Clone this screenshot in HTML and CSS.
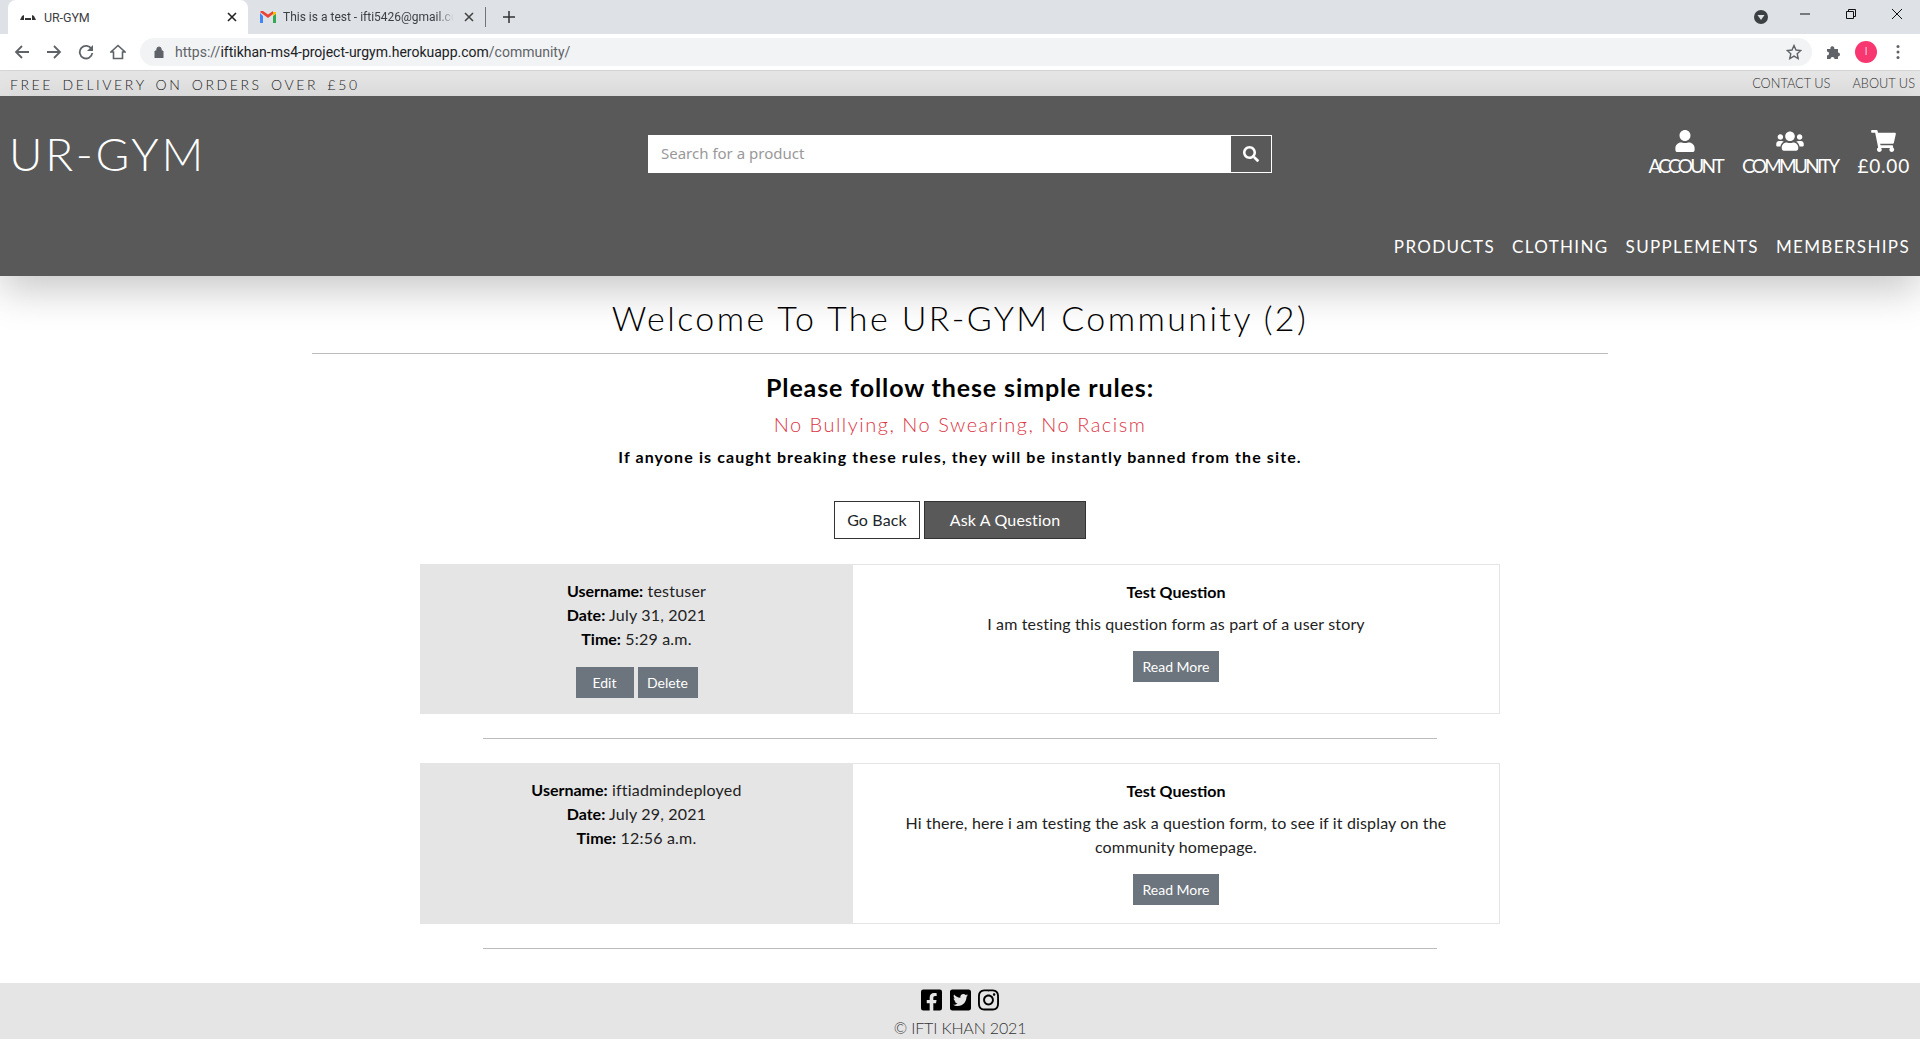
FILE: index.html
```html
<!DOCTYPE html>
<html lang="en">
<head>
<meta charset="utf-8">
<title>UR-GYM</title>
<link rel="stylesheet" href="styles.css">
</head>
<body>
<div class="tabstrip">
  <div class="tab tab-active">
    <svg class="favicon" viewBox="0 0 16 8"><path d="M0 7 2 3l2-1v5zM5 5h6v2H5zM16 7l-2-4-2-1v5z" fill="#333"/></svg>
    <span class="tab-title">UR-GYM</span>
    <svg class="tab-x" viewBox="0 0 10 10"><path d="M1 1l8 8M9 1l-8 8" stroke="#222" stroke-width="1.6"/></svg>
  </div>
  <div class="tab tab-other">
    <svg class="favicon gm" viewBox="0 0 16 12"><path d="M0 2v10h3V5z" fill="#4285f4"/><path d="M16 2v10h-3V5z" fill="#34a853"/><path d="M13 1v4l3-2V1z" fill="#fbbc04"/><path d="M0 1l8 6 5-4V0L8 3.500 3 0 1 0 0 1z" fill="#ea4335"/></svg>
    <span class="tab-title clip">This is a test - ifti5426@gmail.co</span>
    <svg class="tab-x" viewBox="0 0 10 10"><path d="M1 1l8 8M9 1l-8 8" stroke="#444" stroke-width="1.6"/></svg>
  </div>
  <span class="tab-sep"></span>
  <svg class="plus" viewBox="0 0 12 12"><path d="M6 0v12M0 6h12" stroke="#333" stroke-width="1.5"/></svg>
  <span class="strip-fill"></span>
  <svg class="media" viewBox="0 0 14 14"><circle cx="7" cy="7" r="7" fill="#3c4043"/><path d="M3.500 5h7L7 10z" fill="#dee1e6"/></svg>
  <div class="winbtns">
    <svg viewBox="0 0 12 12"><path d="M1 6h10" stroke="#111" stroke-width="1"/></svg>
    <svg viewBox="0 0 12 12"><path d="M1.500 3.500h7v7h-7zM3.500 3.500v-2h7v7h-2" fill="none" stroke="#111"/></svg>
    <svg viewBox="0 0 12 12"><path d="M1 1l10 10M11 1L1 11" stroke="#111"/></svg>
  </div>
</div>
<div class="toolbar">
  <svg class="tool" viewBox="0 0 16 16"><path d="M15 8H2M8 2L2 8l6 6" fill="none" stroke="#5f6368" stroke-width="1.800"/></svg>
  <svg class="tool" viewBox="0 0 16 16"><path d="M1 8h13M8 2l6 6-6 6" fill="none" stroke="#5f6368" stroke-width="1.800"/></svg>
  <svg class="tool" viewBox="0 0 16 16"><path d="M13.500 5A6.300 6.300 0 1 0 14.300 9" fill="none" stroke="#5f6368" stroke-width="1.800"/><path d="M15 1v6H9z" fill="#5f6368"/></svg>
  <svg class="tool" viewBox="0 0 16 16"><path d="M8 1.500L1 8h2.500v6.500h9V8H15z" fill="none" stroke="#5f6368" stroke-width="1.600"/></svg>
  <div class="omnibox">
    <svg class="lock" viewBox="0 0 10 12"><path d="M1 5h8v7H1zM2.800 5V3.200a2.200 2.200 0 0 1 4.400 0V5" fill="#5f6368" stroke="#5f6368"/></svg>
    <span class="url"><span class="url-dim">https://</span>iftikhan-ms4-project-urgym.herokuapp.com<span class="url-dim">/community/</span></span>
    <svg class="star" viewBox="0 0 16 16"><path d="M8 1.500l2 4.500 4.800.5-3.600 3.200 1 4.800L8 12.100 3.800 14.500l1-4.800L1.200 6.500 6 6z" fill="none" stroke="#5f6368" stroke-width="1.400"/></svg>
  </div>
  <svg class="puzzle" viewBox="0 0 16 16"><path d="M1 5h3.500a2 2 0 1 1 3.800-.500V5H12v3.500a2 2 0 1 1 0 4V15H8.500a2 2 0 1 0-4 0H1v-3.500a2 2 0 1 0 0-4z" fill="#5f6368"/></svg>
  <span class="avatar">I</span>
  <svg class="dots" viewBox="0 0 4 16"><circle cx="2" cy="2.500" r="1.500" fill="#5f6368"/><circle cx="2" cy="8" r="1.500" fill="#5f6368"/><circle cx="2" cy="13.500" r="1.500" fill="#5f6368"/></svg>
</div>

<div class="promo">
  <span class="promo-text">FREE DELIVERY ON ORDERS OVER £50</span>
  <nav class="promo-links"><a>CONTACT US</a><a>ABOUT US</a></nav>
</div>

<header class="site-header">
  <div class="header-top">
    <a class="logo">UR-GYM</a>
    <form class="search">
      <span class="search-input">Search for a product</span>
      <span class="search-btn"><svg viewBox="0 0 512 512"><path fill="#fff" d="M505 442.700L405.300 343c-4.500-4.500-10.600-7-17-7H372c27.600-35.300 44-79.700 44-128C416 93.100 322.900 0 208 0S0 93.100 0 208s93.100 208 208 208c48.300 0 92.700-16.400 128-44v16.300c0 6.400 2.500 12.500 7 17l99.700 99.700c9.400 9.400 24.600 9.400 33.900 0l28.300-28.300c9.400-9.400 9.400-24.600.1-34zM208 336c-70.700 0-128-57.200-128-128 0-70.700 57.200-128 128-128 70.700 0 128 57.200 128 128 0 70.700-57.200 128-128 128z"/></svg></span>
    </form>
    <div class="header-icons">
      <a class="hicon"><svg class="ic-user" viewBox="0 0 448 512"><path fill="#fff" d="M224 256c70.700 0 128-57.300 128-128S294.700 0 224 0 96 57.300 96 128s57.300 128 128 128zm89.600 32h-16.700c-22.200 10.200-46.900 16-72.900 16s-50.600-5.800-72.900-16h-16.700C60.200 288 0 348.200 0 422.400V464c0 26.500 21.500 48 48 48h352c26.500 0 48-21.500 48-48v-41.600c0-74.200-60.200-134.400-134.400-134.400z"/></svg><span>ACCOUNT</span></a>
      <a class="hicon"><svg class="ic-users" viewBox="0 0 640 512"><path fill="#fff" d="M96 224c35.300 0 64-28.700 64-64s-28.700-64-64-64-64 28.700-64 64 28.700 64 64 64zm448 0c35.300 0 64-28.700 64-64s-28.700-64-64-64-64 28.700-64 64 28.700 64 64 64zm32 32h-64c-17.600 0-33.500 7.100-45.100 18.600 40.300 22.100 68.900 62 75.100 109.400h66c17.700 0 32-14.300 32-32v-32c0-35.300-28.700-64-64-64zm-256 0c61.900 0 112-50.100 112-112S381.900 32 320 32 208 82.100 208 144s50.100 112 112 112zm76.800 32h-8.300c-20.800 10-43.900 16-68.500 16s-47.600-6-68.500-16h-8.300C179.600 288 128 339.600 128 403.200V432c0 26.500 21.500 48 48 48h288c26.500 0 48-21.500 48-48v-28.800c0-63.600-51.600-115.200-115.200-115.200zm-223.700-13.400C161.500 263.100 145.600 256 128 256H64c-35.300 0-64 28.700-64 64v32c0 17.700 14.300 32 32 32h65.900c6.300-47.400 34.900-87.300 75.200-109.400z"/></svg><span>COMMUNITY</span></a>
      <a class="hicon hicon-price"><svg class="ic-cart" viewBox="0 0 576 512"><path fill="#fff" d="M528.120 301.319l47.273-208C578.806 78.301 567.391 64 551.990 64H159.208l-9.166-44.810C147.758 8.021 137.930 0 126.529 0H24C10.745 0 0 10.745 0 24v16c0 13.255 10.745 24 24 24h69.883l70.248 343.435C147.325 417.100 136 435.222 136 456c0 30.928 25.072 56 56 56s56-25.072 56-56c0-15.674-6.447-29.835-16.824-40h209.647C430.447 426.165 424 440.326 424 456c0 30.928 25.072 56 56 56s56-25.072 56-56c0-22.172-12.888-41.332-31.579-50.405l5.517-24.276c3.413-15.018-8.002-29.319-23.403-29.319H218.117l-6.545-32h293.145c11.206 0 20.920-7.754 23.403-18.681z"/></svg><span>£0.00</span></a>
    </div>
  </div>
  <nav class="mainnav"><a>PRODUCTS</a><a>CLOTHING</a><a>SUPPLEMENTS</a><a>MEMBERSHIPS</a></nav>
</header>

<main class="content">
  <h1 class="page-title">Welcome To The UR-GYM Community (2)</h1>
  <hr class="rule-wide">
  <h2 class="rules-head">Please follow these simple rules:</h2>
  <p class="rules-red">No Bullying, No Swearing, No Racism</p>
  <p class="rules-warn">If anyone is caught breaking these rules, they will be instantly banned from the site.</p>
  <div class="actions">
    <a class="btn btn-outline">Go Back</a>
    <a class="btn btn-dark">Ask A Question</a>
  </div>

  <article class="card card-one">
    <div class="meta">
      <p><b>Username:</b> testuser</p>
      <p><b>Date:</b> July 31, 2021</p>
      <p><b>Time:</b> 5:29 a.m.</p>
      <div class="meta-btns"><a class="sbtn sbtn-edit">Edit</a><a class="sbtn sbtn-del">Delete</a></div>
    </div>
    <div class="question">
      <h3>Test Question</h3>
      <p>I am testing this question form as part of a user story</p>
      <a class="sbtn">Read More</a>
    </div>
  </article>
  <hr class="rule-card">
  <article class="card card-two">
    <div class="meta">
      <p><b>Username:</b> iftiadmindeployed</p>
      <p><b>Date:</b> July 29, 2021</p>
      <p><b>Time:</b> 12:56 a.m.</p>
    </div>
    <div class="question">
      <h3>Test Question</h3>
      <p>Hi there, here i am testing the ask a question form, to see if it display on the community homepage.</p>
      <a class="sbtn">Read More</a>
    </div>
  </article>
  <hr class="rule-card">
</main>

<footer class="footer">
  <div class="socials">
    <svg viewBox="0 0 448 512"><path d="M400 32H48A48 48 0 0 0 0 80v352a48 48 0 0 0 48 48h137.250V327.690h-63V256h63v-54.640c0-62.150 37-96.480 93.670-96.480 27.140 0 55.520 4.840 55.520 4.840v61h-31.270c-30.810 0-40.420 19.120-40.420 38.730V256h68.780l-11 71.690h-57.780V480H400a48 48 0 0 0 48-48V80a48 48 0 0 0-48-48z"/></svg>
    <svg viewBox="0 0 448 512"><path d="M400 32H48C21.500 32 0 53.500 0 80v352c0 26.500 21.500 48 48 48h352c26.500 0 48-21.500 48-48V80c0-26.500-21.500-48-48-48zm-48.900 158.800c.2 2.800.2 5.700.2 8.500 0 86.700-66 186.600-186.600 186.600-37.200 0-71.700-10.800-100.700-29.400 5.300.6 10.400.8 15.800.8 30.700 0 58.900-10.400 81.400-28-28.800-.6-53-19.500-61.300-45.500 10.100 1.500 19.200 1.500 29.600-1.200-30-6.100-52.500-32.500-52.500-64.400v-.8c8.700 4.900 18.900 7.900 29.600 8.300a65.447 65.447 0 0 1-29.200-54.600c0-12.200 3.200-23.400 8.900-33.100 32.300 39.800 80.800 65.800 135.200 68.600-9.300-44.500 24-80.600 64-80.600 18.900 0 35.900 7.900 47.900 20.700 14.800-2.800 29-8.300 41.600-15.800-4.900 15.200-15.200 28-28.800 36.100 13.200-1.400 26-5.100 37.800-10.200-8.900 13.100-20.100 24.700-32.900 34z"/></svg>
    <svg viewBox="0 0 448 512"><path d="M224.100 141c-63.600 0-114.900 51.300-114.900 114.900s51.300 114.900 114.900 114.900S339 319.500 339 255.900 287.700 141 224.100 141zm0 189.600c-41.100 0-74.700-33.500-74.700-74.700s33.500-74.700 74.700-74.700 74.700 33.500 74.700 74.700-33.600 74.700-74.700 74.700zm146.400-194.300c0 14.900-12 26.800-26.800 26.800-14.900 0-26.800-12-26.800-26.800s12-26.800 26.800-26.800 26.800 12 26.800 26.800zm76.100 27.200c-1.700-35.900-9.900-67.700-36.200-93.900-26.200-26.200-58-34.400-93.900-36.200-37-2.100-147.900-2.100-184.900 0-35.800 1.700-67.600 9.900-93.900 36.100s-34.400 58-36.200 93.900c-2.100 37-2.100 147.900 0 184.900 1.700 35.900 9.900 67.700 36.200 93.900s58 34.400 93.900 36.200c37 2.100 147.900 2.100 184.900 0 35.900-1.700 67.700-9.900 93.900-36.200 26.200-26.200 34.400-58 36.200-93.900 2.100-37 2.100-147.800 0-184.800zM398.800 388c-7.800 19.600-22.900 34.700-42.600 42.600-29.500 11.700-99.500 9-132.100 9s-102.700 2.600-132.100-9c-19.600-7.800-34.700-22.900-42.600-42.600-11.700-29.500-9-99.500-9-132.100s-2.600-102.700 9-132.100c7.800-19.600 22.900-34.700 42.600-42.600 29.500-11.700 99.500-9 132.100-9s102.700-2.600 132.100 9c19.600 7.800 34.700 22.900 42.600 42.600 11.700 29.500 9 99.500 9 132.100s2.700 102.700-9 132.100z"/></svg>
  </div>
  <p class="copyright">© IFTI KHAN 2021</p>
</footer>
</body>
</html>
```
FILE: styles.css
```css
* { box-sizing: border-box; }
html, body { margin: 0; padding: 0; }
body { height: 1040px; overflow: hidden; background: #fff; font-family: "Lato", "Noto Sans", sans-serif; color: #212529; font-size: 16px; }
p, h1, h2, h3 { margin: 0; }

/* browser chrome */
.tabstrip { height: 34px; background: #dee1e6; display: flex; align-items: center; padding-left: 8px; font-family: "Roboto", sans-serif; font-size: 12.500px; color: #3c4043; }
.tab { height: 34px; display: flex; align-items: center; }
.tab-active { width: 240px; background: #fff; border-radius: 8px 8px 0 0; padding: 0 11px 0 12px; color: #3c4043; }
.tab-other { width: 236px; padding: 0 10px 0 12px; }
.favicon { width: 16px; height: 8px; margin-right: 8px; flex: none; }
.gm { height: 12px; margin-right: 7px; }
.tab-title { flex: 1; min-width: 0; white-space: nowrap; letter-spacing: -.1px; }
.clip { font-size: 12px; letter-spacing: 0; -webkit-mask-image: linear-gradient(90deg, #000 90%, transparent 100%); mask-image: linear-gradient(90deg, #000 90%, transparent 100%); }
.tab-x { width: 10px; height: 10px; flex: none; margin-left: 10px; }
.tab-sep { width: 1px; height: 20px; background: #70757a; margin-left: 1px; }
.plus { width: 12px; height: 12px; margin-left: 17px; }
.strip-fill { flex: 1; }
.media { width: 14px; height: 14px; margin-right: 31px; }
.winbtns { display: flex; gap: 34px; padding-right: 17px; }
.winbtns svg { width: 12px; height: 12px; margin-top: -6px; }

.toolbar { height: 37px; background: #fff; border-bottom: 1px solid #d5d5d5; display: flex; align-items: center; padding: 0 0 1px 14px; }
.tool { width: 16px; height: 16px; margin-right: 16px; flex: none; }
.omnibox { width: 1672px; height: 28px; margin-left: -2px; background: #f1f3f4; border-radius: 14px; display: flex; align-items: center; padding: 0 10px 0 14px; font-family: "Roboto", sans-serif; font-size: 14px; color: #202124; }
.lock { width: 10px; height: 12px; margin-right: 11px; flex: none; }
.url { flex: 1; white-space: nowrap; }
.url-dim { color: #5f6368; }
.star { width: 16px; height: 16px; }
.puzzle { width: 16px; height: 16px; margin-left: 14px; flex: none; }
.avatar { width: 22px; height: 22px; border-radius: 50%; background: #f8366f; color: #ffd9e4; margin-left: 13px; font: 10px/22px "Roboto", sans-serif; text-align: center; flex: none; }
.dots { width: 4px; height: 16px; margin-left: 19px; flex: none; }

/* site */
.promo { height: 25px; background: #e5e5e5; display: flex; justify-content: space-between; align-items: center; padding: 0 5px 0 10px; color: #222; font-weight: 300; }
.promo-text { font-size: 14px; letter-spacing: 2.600px; word-spacing: 3px; margin-top: 1px; }
.promo-links { display: flex; gap: 22px; font-size: 12.800px; margin-top: -2px; color: #333; }

.site-header { height: 180px; background: #595959; color: #fff; padding: 0 10px; box-shadow: 0 14px 38px rgba(0,0,0,.22); display: flex; flex-direction: column; justify-content: space-between; }
.header-top { display: grid; grid-template-columns: 1fr 624px 1fr; align-items: start; padding-top: 39px; }
.logo { font-size: 46px; line-height: 38px; font-weight: 300; letter-spacing: 2.700px; margin-left: -1px; }
.search { display: flex; height: 38px; background: #fff; }
.search-input { flex: 1; padding-left: 13px; line-height: 36px; font-size: 15px; color: #999; font-family: "Noto Sans", sans-serif; }
.search-btn { width: 42px; background: #595959; border: 1px solid #fff; display: flex; align-items: center; justify-content: center; }
.search-btn svg { width: 16px; height: 16px; }
.header-icons { display: flex; justify-content: flex-end; gap: 20px; margin-top: -5px; }
.hicon { display: flex; flex-direction: column; align-items: center; font-size: 19px; letter-spacing: -2.700px; line-height: 24px; }
.hicon-price { letter-spacing: .8px; }
.hicon svg { height: 22px; margin-bottom: 2px; }
.ic-user { width: 20px; }
.ic-users { width: 28px; }
.ic-cart { width: 25px; }
.mainnav { display: flex; justify-content: flex-end; gap: 17px; padding-bottom: 18px; font-size: 17px; letter-spacing: 1.350px; line-height: 22px; }

.content { text-align: center; }
.page-title { font-size: 34px; font-weight: 300; letter-spacing: 2.400px; line-height: 44px; color: #000; padding-top: 20px; }
.rule-wide { width: 1296px; margin: 13px auto 0; border: 0; border-top: 1px solid #bbb; }
.rules-head { font-size: 25px; line-height: 32px; font-weight: 700; color: #000; margin-top: 17px; letter-spacing: .88px; }
.rules-red { font-size: 20px; line-height: 28px; font-weight: 300; color: #dc3545; margin-top: 7px; letter-spacing: 1.500px; }
.rules-warn { font-size: 16px; line-height: 24px; font-weight: 700; color: #000; margin-top: 7px; letter-spacing: 1.100px; }
.actions { display: flex; justify-content: center; gap: 4px; margin-top: 32px; }
.btn { height: 38px; border: 1px solid #333; line-height: 36px; font-size: 16px; letter-spacing: .15px; }
.btn-outline { width: 86px; background: #fff; }
.btn-dark { width: 162px; background: #595959; color: #fff; }

.card { width: 1080px; margin: 25px auto 0; display: grid; grid-template-columns: 433px 1fr; }
.card-one { height: 150px; }
.card-two { height: 161px; margin-top: 24px; }
.meta { background: #e5e5e5; padding-top: 15px; }
.meta p { line-height: 24px; font-size: 16px; color: #222; letter-spacing: .2px; }
.meta b { color: #000; letter-spacing: 0; }
.meta-btns { display: flex; justify-content: center; gap: 4px; margin-top: 16px; }
.question { border: 1px solid #e5e5e5; border-left: 0; padding: 15px 38px 0; }
.question h3 { font-size: 16px; font-weight: 700; line-height: 24px; color: #000; }
.question p { font-size: 16px; line-height: 24px; margin-top: 8px; color: #222; letter-spacing: .15px; }
.question .sbtn { margin-top: 15px; }
.sbtn { display: inline-block; height: 31px; padding: 0 9px; background: #6c757d; color: #fff; font-size: 14px; line-height: 31px; }
.sbtn-edit { width: 58px; }
.sbtn-del { width: 60px; padding: 0; }
.rule-card { width: 954px; margin: 24px auto 0; border: 0; border-top: 1px solid #bbb; }

.footer { margin-top: 34px; height: 56px; background: #e5e5e5; text-align: center; }
.socials { display: flex; justify-content: center; gap: 7.500px; padding-top: 5px; height: 33px; }
.socials svg { width: 21px; height: 24px; fill: #000; }
.copyright { font-size: 16px; font-weight: 300; color: #333; line-height: 24px; letter-spacing: -.15px; }
```
